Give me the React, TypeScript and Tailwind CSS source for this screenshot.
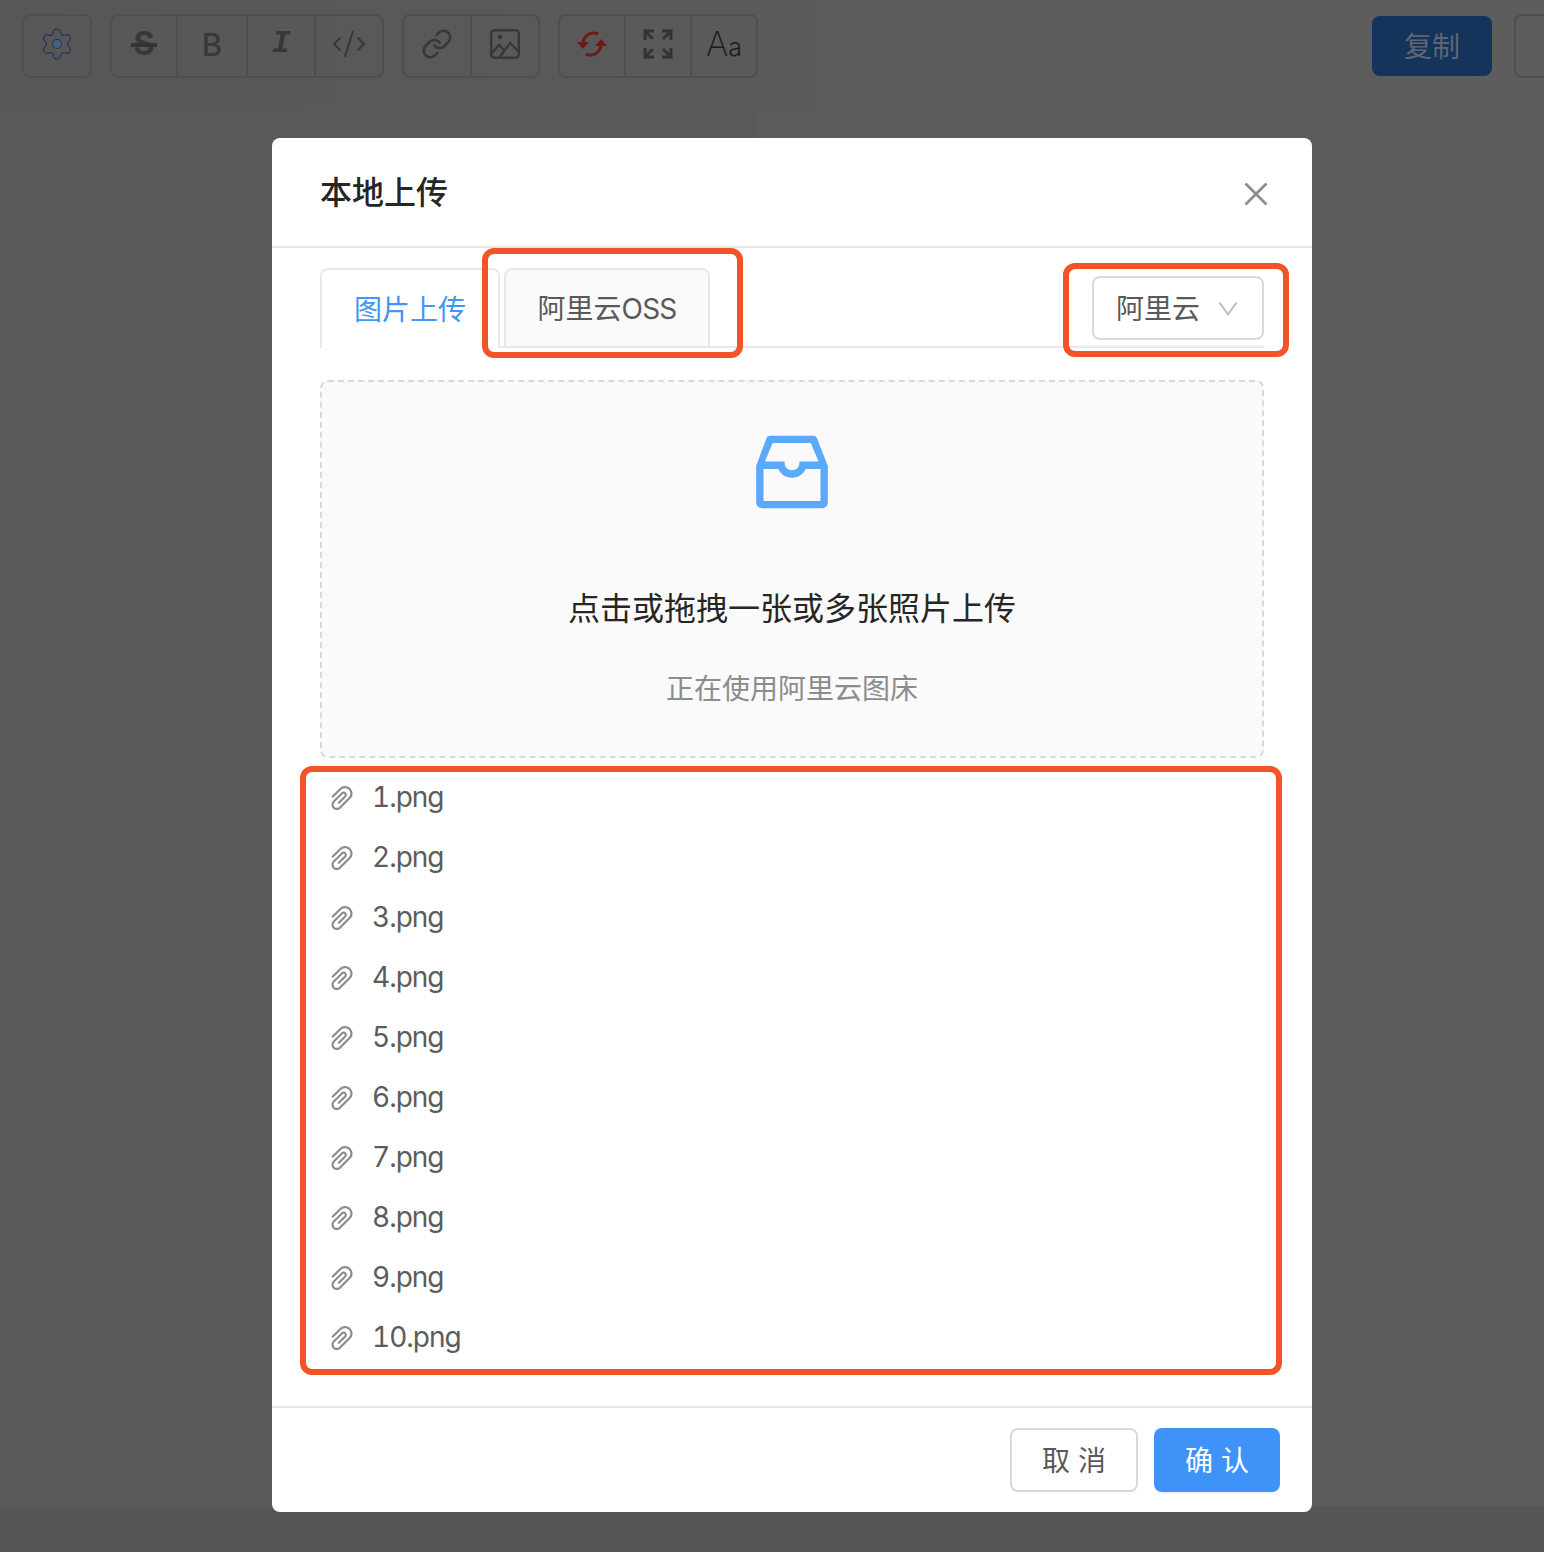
import { ReactNode } from "react";
import { AiOutlineClose, AiOutlineDown, AiOutlineInbox, AiOutlinePaperClip } from "react-icons/ai";
import { CodeXml, Link, Settings } from "lucide-react";

const FILES = ["1.png", "2.png", "3.png", "4.png", "5.png", "6.png", "7.png", "8.png", "9.png", "10.png"];

function ToolGroup({ children }: { children: ReactNode }) {
  return (
    <div className="flex h-16 divide-x-2 divide-[#4f4f4f] rounded-lg border-2 border-[#4f4f4f]">
      {children}
    </div>
  );
}

// icons sit a little above the middle of their cell in the original
function Tool({ width, children }: { width: string; children: ReactNode }) {
  return <div className={`flex items-center justify-center pb-1 text-[#383838] ${width}`}>{children}</div>;
}

function FullscreenIcon() {
  return (
    <svg width="32" height="32" viewBox="0 0 32 32" fill="none" stroke="#333333" strokeWidth="3">
      <path d="M3 12V3h9M3 3l8 8M20 3h9v9M29 3l-8 8M3 20v9h9M3 29l8-8M29 20v9h-9M29 29l-8-8" />
    </svg>
  );
}

function SyncIcon() {
  return (
    <svg width="30" height="26" viewBox="0 0 30 26" fill="none" stroke="#6e1a1a" strokeWidth="3">
      <path d="M21 3C14 0 7 4 6 12M9 23c7 3 14-1 15-9" />
      <path d="M0 11h12l-6 7zM18 15h12l-6-7z" fill="#6e1a1a" stroke="none" />
    </svg>
  );
}

function PictureIcon() {
  return (
    <svg width="30" height="30" viewBox="0 0 30 30" fill="none" stroke="#383838" strokeWidth="2.4">
      <rect x="1.2" y="1.2" width="27.6" height="27.6" rx="3" />
      <circle cx="10" cy="8" r="2.2" fill="#383838" stroke="none" />
      <path d="M1 25l8-9 6 6M9 29l11-15 9 9" />
    </svg>
  );
}

function Toolbar() {
  return (
    <div className="flex h-[110px] items-start bg-linear-to-r from-[#575757] to-[#5d5d5d] pt-3.5 pl-[22px]">
      <ToolGroup>
        <Tool width="w-[66px]">
          <Settings size={36} strokeWidth={0.7} className="text-[#1b3560] [&_circle]:fill-[#47607f]" />
        </Tool>
      </ToolGroup>
      <div className="ml-[18px]">
        <ToolGroup>
          <Tool width="w-[66px]">
            <span className="relative text-[32px] leading-none font-bold">
              S
              <span className="absolute top-[15px] -left-[3px] h-[4px] w-[26px] bg-[#333333]" />
            </span>
          </Tool>
          <Tool width="w-[70px]">
            <span className="text-[31px] leading-none font-medium">B</span>
          </Tool>
          <Tool width="w-[68px]">
            <span className="font-['Liberation_Mono',monospace] text-[32px] leading-none font-bold italic">I</span>
          </Tool>
          <Tool width="w-[66px]">
            <CodeXml size={36} strokeWidth={1.4} />
          </Tool>
        </ToolGroup>
      </div>
      <div className="ml-[18px]">
        <ToolGroup>
          <Tool width="w-[68px]">
            <Link size={32} strokeWidth={2} />
          </Tool>
          <Tool width="w-[66px]">
            <PictureIcon />
          </Tool>
        </ToolGroup>
      </div>
      <div className="ml-[18px]">
        <ToolGroup>
          <Tool width="w-[66px]">
            <SyncIcon />
          </Tool>
          <Tool width="w-[66px]">
            <FullscreenIcon />
          </Tool>
          <Tool width="w-[64px]">
            <span className="font-['Inter',sans-serif] text-[34px] leading-none font-extralight text-[#1c1c1c]">
              A<span className="text-[25px] font-light">a</span>
            </span>
          </Tool>
        </ToolGroup>
      </div>
      <div className="mt-0.5 ml-auto flex items-start">
        <div className="flex h-[60px] w-[120px] items-center justify-center rounded-lg bg-[#15345c] pt-0.5 text-[28px] text-[#5d6672]">
          复制
        </div>
        <div className="-mt-0.5 ml-[22px] h-16 w-[30px] rounded-l-lg border-2 border-r-0 border-[#4f4f4f]" />
      </div>
    </div>
  );
}

function RedBox({ className }: { className: string }) {
  return <div className={`pointer-events-none absolute rounded-[12px] border-[6px] border-[#f25327] ${className}`} />;
}

function UploadModal() {
  return (
    <div className="absolute top-[138px] left-[272px] flex h-[1374px] w-[1040px] flex-col rounded-lg bg-white">
      <div className="flex h-[110px] shrink-0 items-center justify-between border-b-2 border-[#e8e8e8] pr-[39px] pl-12">
        <h1 className="pt-0.5 text-[32px] leading-none font-medium text-[#262626]">本地上传</h1>
        <AiOutlineClose size={34} className="mt-1 text-[#8c8c8c]" />
      </div>

      <div className="px-12 pt-5">
        <div className="flex h-20 text-[28px]">
          <div className="flex w-[180px] items-center justify-center rounded-t-lg border-2 border-b-0 border-[#e8e8e8] pt-0.5 text-[#4096f5]">
            图片上传
          </div>
          <div className="w-1 border-b-2 border-[#e8e8e8]" />
          <div className="flex w-[206px] items-center justify-center rounded-t-lg border-2 border-[#e8e8e8] bg-[#fafafa] pt-0.5 text-[#595959]">
            阿里云<span className="tracking-[-0.8px]">OSS</span>
          </div>
          <div className="flex flex-1 justify-end border-b-2 border-[#e8e8e8] pt-2">
            <div className="flex h-16 w-[172px] items-center rounded-lg border-2 border-[#d9d9d9] pt-0.5 pl-[22px] text-[#595959]">
              阿里云
              <AiOutlineDown size={26} className="ml-[15px] text-[#bfbfbf]" />
            </div>
          </div>
        </div>

        <div className="mt-8 flex h-[378px] flex-col items-center rounded-lg border-2 border-dashed border-[#d9d9d9] bg-[#fafafa] pt-[41px]">
          <AiOutlineInbox size={98} className="text-[#5aa9fa]" />
          <p className="mt-[64px] text-[32px] leading-[48px] text-[#262626]">点击或拖拽一张或多张照片上传</p>
          <p className="mt-9 text-[28px] leading-10 text-[#8c8c8c]">正在使用阿里云图床</p>
        </div>

        <ul className="mt-[9px]">
          {FILES.map((name) => (
            <li key={name} className="flex h-[60px] items-center gap-[14px] pl-1.5 text-[28px] text-[#5c5c5c]">
              <AiOutlinePaperClip size={32} className="mt-px text-[#8c8c8c]" />
              <span className="tracking-[-1px] tabular-nums">{name}</span>
            </li>
          ))}
        </ul>
      </div>

      <div className="mt-auto flex h-[106px] items-start justify-end gap-4 border-t-2 border-[#e8e8e8] pt-5 pr-8 text-[28px]">
        <div className="flex h-16 w-32 items-center justify-center rounded-lg border-2 border-[#d9d9d9] bg-white pt-0.5 text-[#595959] shadow-[0_2px_0_rgba(0,0,0,0.015)]">
          取 消
        </div>
        <div className="flex h-16 w-[126px] items-center justify-center rounded-lg bg-[#3f92f8] pt-0.5 text-white shadow-[0_2px_0_rgba(0,0,0,0.045)]">
          确 认
        </div>
      </div>
    </div>
  );
}

export default function App() {
  return (
    <div className="relative h-[1552px] w-[1544px] overflow-hidden bg-[#565656] font-['Inter','Noto_Sans_CJK_SC',sans-serif]">
      <Toolbar />
      <div className="flex h-[1396px]">
        <div className="w-[756px] bg-[#595959]" />
        <div className="w-[388px] bg-[#5b5b5b]" />
        <div className="flex-1 bg-[#5c5c5c]" />
      </div>
      <UploadModal />
      <RedBox className="top-[248px] left-[482px] h-[110px] w-[261px]" />
      <RedBox className="top-[263px] left-[1063px] h-[94px] w-[226px]" />
      <RedBox className="top-[766px] left-[300px] h-[609px] w-[982px]" />
    </div>
  );
}
